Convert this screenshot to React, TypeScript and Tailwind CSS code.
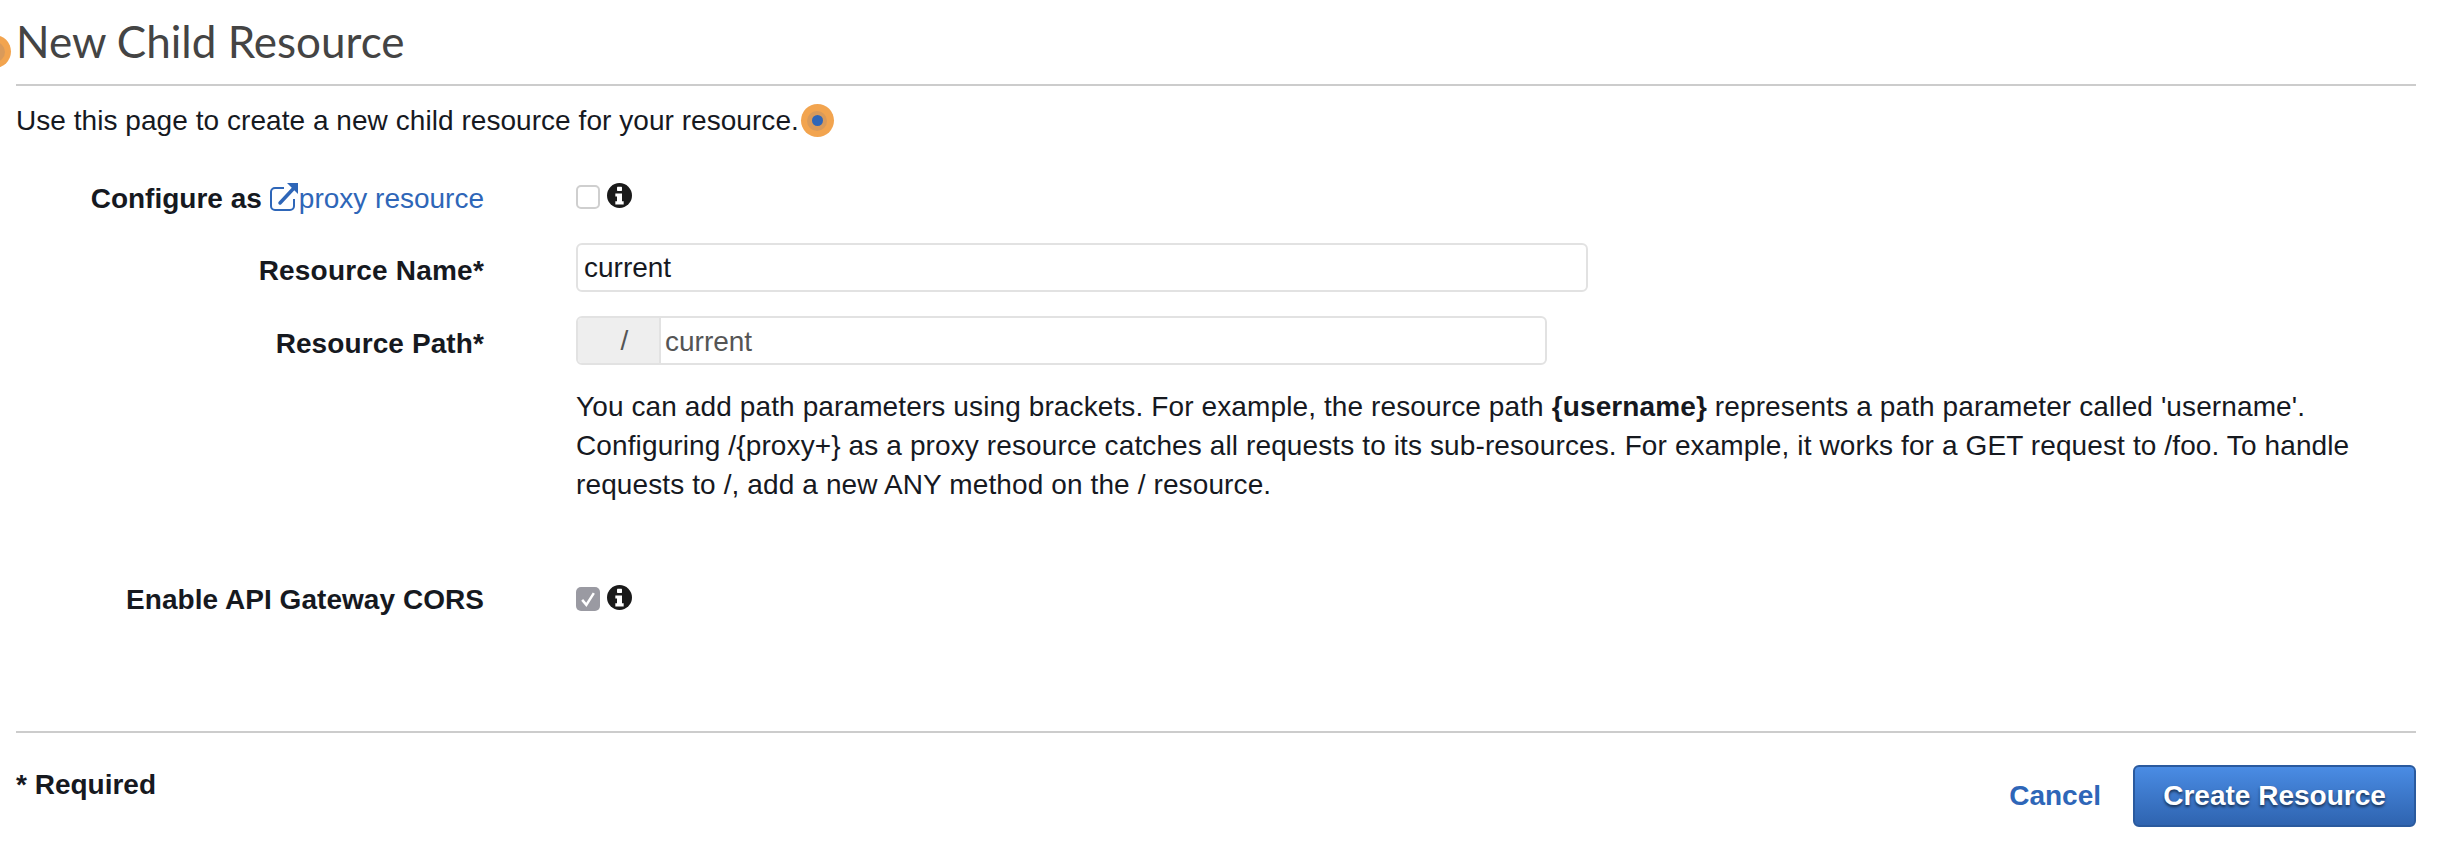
const Hotspot = ({ center }: { center: string }) => (
    <span className="flex h-[33px] w-[33px] shrink-0 items-center justify-center rounded-full bg-[#f2a44f]">
        <span className="flex h-[20px] w-[20px] items-center justify-center rounded-full bg-[#d99a5a]">
            <span className={`h-[11px] w-[11px] rounded-full ${center}`} />
        </span>
    </span>
);

const Info = () => (
    <svg viewBox="0 0 24 24" className="ml-[7px] -mt-[3px] h-[25px] w-[25px]">
        <circle cx="12" cy="12" r="12" fill="#1a1a1a" />
        <rect x="9.6" y="3.6" width="4.8" height="4" rx="0.6" fill="#ffffff" />
        <path d="M8 10h6.4v7.6H16v3H8v-3h1.6v-4.6H8z" fill="#ffffff" />
    </svg>
);

const App = () => {
    return (
        <div className="relative h-[862px] w-[2444px] overflow-hidden bg-white font-['Liberation_Sans',Arial,sans-serif] text-[28px] text-[#16191f]">
            <div className="absolute -left-[22px] top-[35px]">
                <Hotspot center="bg-[#a08a72]" />
            </div>

            <div className="pl-4 pr-[28px]">
                {/* Header */}
                <h1 className="h-[86px] border-b-2 border-[#cccccc] pt-[15px] font-['Lato',sans-serif] text-[44px] leading-[53px] text-[#444444]">
                    New Child Resource
                </h1>

                <div className="mt-[18px] flex items-center leading-[33px] tracking-[0.05px]">
                    <span>Use this page to create a new child resource for your resource.</span>
                    <span className="ml-[2px]">
                        <Hotspot center="bg-[#2f66b8]" />
                    </span>
                </div>

                {/* Form */}
                <div className="mt-[45px] grid grid-cols-[468px_1fr] gap-x-[92px]">
                    <div className="flex h-[33px] items-center justify-end font-bold">
                        Configure as
                        <span className="ml-[7px] flex items-center font-normal text-[#2e66b8]">
                            <svg viewBox="0 0 30 30" className="h-[30px] w-[30px] -mt-[4px]" fill="none" stroke="currentColor">
                                <path d="M15 6H6a4 4 0 0 0-4 4v14a4 4 0 0 0 4 4h15a4 4 0 0 0 4-4v-7" strokeWidth="2" />
                                <path d="M11 21L25 6" strokeWidth="3.5" strokeLinecap="round" />
                                <path d="M18 1h11v11z" fill="currentColor" stroke="none" />
                            </svg>
                            proxy resource
                        </span>
                    </div>
                    <div className="flex h-[33px] items-center pb-[3px]">
                        <span className="h-[24px] w-[24px] rounded-[5px] border-2 border-[#cfcfcf] bg-white" />
                        <Info />
                    </div>

                    <div className="mt-[28px] flex h-[49px] items-center justify-end pt-[6px] font-bold tracking-[0.2px]">Resource Name*</div>
                    <div className="mt-[28px] flex h-[49px] w-[1012px] items-center rounded-[6px] border-2 border-[#e2e2e2] pl-[6px] pt-[1px]">
                        current
                    </div>

                    <div className="mt-[24px] flex h-[49px] items-center justify-end pt-[6px] font-bold tracking-[0.1px]">Resource Path*</div>
                    <div className="mt-[24px] flex h-[49px] w-[971px] overflow-hidden rounded-[6px] border-2 border-[#e2e2e2] text-[#555555]">
                        <span className="flex w-[83px] items-center justify-center border-r-2 border-[#e2e2e2] bg-[#eeeeee] pl-[12px]">/</span>
                        <span className="flex items-center pl-[4px] pt-[2px]">current</span>
                    </div>

                    <div />
                    <p className="mt-[22px] w-[1790px] leading-[39px] tracking-[0.115px]">
                        You can add path parameters using brackets. For example, the resource path <b>{'{username}'}</b> represents a path parameter called 'username'. Configuring /{'{proxy+}'} as a proxy resource catches all requests to its sub-resources. For example, it works for a GET request to /foo. To handle requests to /, add a new ANY method on the / resource.
                    </p>

                    <div className="mt-[79px] flex h-[33px] items-center justify-end font-bold tracking-[0.05px]">Enable API Gateway CORS</div>
                    <div className="mt-[79px] flex h-[33px] items-center pb-[2px]">
                        <span className="flex h-[24px] w-[24px] items-center justify-center rounded-[5px] bg-[#9a9aa2]">
                            <svg viewBox="0 0 24 24" className="h-[20px] w-[20px]" fill="none" stroke="#ffffff" strokeWidth="3">
                                <path d="M5 13l5 6 9-14" />
                            </svg>
                        </span>
                        <Info />
                    </div>
                </div>

                {/* Footer */}
                <div className="mt-[115px] flex items-start justify-between border-t-2 border-[#cccccc]">
                    <span className="mt-[35px] font-bold leading-[33px]">* Required</span>
                    <div className="mt-[32px] flex items-center">
                        <span className="font-bold text-[#2e66b8]">Cancel</span>
                        <button className="ml-[32px] h-[62px] w-[283px] rounded-[6px] border-2 border-[#2a5a9e] bg-gradient-to-b from-[#4a8ce4] to-[#2f64b0] font-bold text-white [text-shadow:0_2px_3px_rgba(0,0,0,0.6)]">
                            Create Resource
                        </button>
                    </div>
                </div>
            </div>
        </div>
    );
};

export default App;
